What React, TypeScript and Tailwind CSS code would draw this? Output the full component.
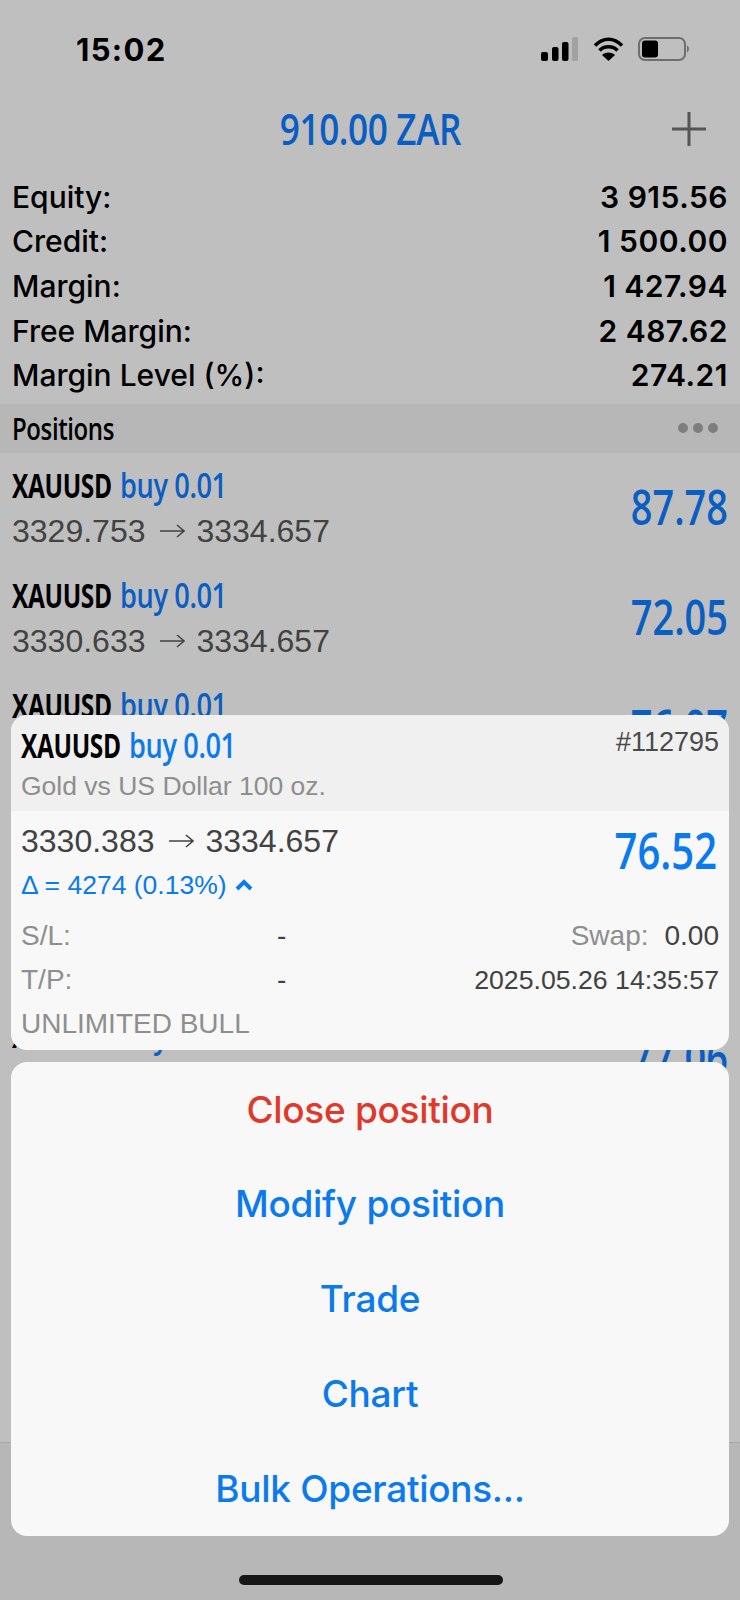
import React from "react";

const DIM_BLUE = "text-[#0a5ec2]";
const SANS = "font-['Open_Sans',sans-serif] font-semibold";
const HELV = "font-['Liberation_Sans',sans-serif]";

const Title = ({ blue }: { blue: string }) => (
  <div className={`flex h-[36px] items-center whitespace-nowrap text-[34px] tracking-[-0.5px] ${SANS}`}>
    <span className="inline-block origin-left scale-x-[0.72] font-bold text-black">XAUUSD</span>
    <span className={`ml-[-30px] inline-block origin-left scale-x-[0.8] ${blue}`}>buy 0.01</span>
  </div>
);

const Arrow = ({ color = "#424242" }: { color?: string }) => (
  <svg className="ml-[15px] mr-[11px] shrink-0" width="25" height="16" viewBox="0 0 25 16">
    <path d="M0 8H24M17 2L24 8L17 14" fill="none" stroke={color} strokeWidth="1.500" />
  </svg>
);

const Prices = ({ open }: { open: string }) => (
  <div className={`flex items-center ${HELV} text-[32px] text-[#424242]`}>
    <span>{open}</span>
    <Arrow />
    <span>3334.657</span>
  </div>
);

const accountRows = [
  ["Equity:", "3 915.56"],
  ["Credit:", "1 500.00"],
  ["Margin:", "1 427.94"],
  ["Free Margin:", "2 487.62"],
  ["Margin Level (%):", "274.21"],
];

// Rows four and five sit entirely behind the detail card.
const rows: (string[] | null)[] = [
  ["3329.753", "87.78"],
  ["3330.633", "72.05"],
  ["3330.383", "76.07"],
  null,
  null,
  ["3330.263", "77.06"],
];

export default function App() {
  return (
    <div className="relative flex h-[1600px] w-[740px] flex-col overflow-hidden bg-[#bfbfbf] font-['Inter',sans-serif]">
      {/* status bar */}
      <div className="flex h-[100px] shrink-0 items-center justify-between pb-[2px] pl-[76px] pr-[49px]">
        <span className="text-[31px] font-bold leading-none tracking-[1.3px] text-black">15:02</span>
        <svg width="150" height="24" viewBox="541 37 150 24">
          <rect x="541" y="52" width="7" height="9" rx="2" fill="#000" />
          <rect x="552" y="47" width="6.500" height="14" rx="2" fill="#000" />
          <rect x="562" y="42" width="6.500" height="19" rx="2" fill="#000" />
          <rect x="572" y="37" width="6" height="24" rx="1.500" fill="#a2a2a2" />
          <path d="M595 45.500C603 37 614 37 622 45.500M599.500 50.500C604 45.500 613 45.500 617.500 50.500" fill="none" stroke="#000" strokeWidth="3.500" />
          <path d="M602 55C605 51.500 612 51.500 615 55L608.500 61Z" fill="#000" />
          <rect x="639" y="38" width="46" height="22" rx="6" fill="none" stroke="#6e6e6e" strokeWidth="2" />
          <rect x="642" y="40.500" width="16" height="17" rx="3" fill="#000" />
          <path d="M687 45.500C689.500 46.500 689.500 51 687 52.500Z" fill="#6e6e6e" />
        </svg>
      </div>

      {/* header */}
      <div className="relative flex h-[60px] shrink-0 items-center justify-center pb-[4px]">
        <span className={`inline-block scale-x-[0.8] whitespace-nowrap text-[44px] tracking-[-0.5px] ${SANS} ${DIM_BLUE}`}>910.00 ZAR</span>
        <svg className="absolute right-[33px] top-[11px]" width="36" height="36" viewBox="0 0 36 36">
          <path d="M18 1V35M1 18H35" stroke="#555" strokeWidth="3" />
        </svg>
      </div>

      {/* account summary */}
      <div className="flex shrink-0 flex-col px-[12px] pt-[15px]">
        {accountRows.map(([label, value]) => (
          <div key={label} className="flex h-[44.600px] items-center justify-between text-[30px] font-medium text-black">
            <span>{label}</span>
            <span className="font-semibold tracking-[0.5px]">{value}</span>
          </div>
        ))}
      </div>

      {/* positions header */}
      <div className="mt-[6px] flex h-[49px] shrink-0 items-center justify-between bg-[#b7b7b7] pl-[12px] pr-[22px]">
        <span className={`inline-block origin-left scale-x-[0.8] text-[30px] font-bold tracking-[-0.5px] text-black ${SANS}`}>Positions</span>
        <div className="flex gap-[5px]">
          <span className="h-[10px] w-[10px] rounded-full bg-[#7e7e7e]" />
          <span className="h-[10px] w-[10px] rounded-full bg-[#7e7e7e]" />
          <span className="h-[10px] w-[10px] rounded-full bg-[#7e7e7e]" />
        </div>
      </div>

      {/* list */}
      <div className="min-h-0 flex-1 overflow-hidden">
        {rows.map((row, i) =>
          row ? (
            <div key={i} className="flex h-[110px] items-center justify-between pb-[2px] pl-[12px] pr-[12px]">
              <div className="mt-[9px] flex flex-col">
                <Title blue={DIM_BLUE} />
                <div className="mt-[4px]">
                  <Prices open={row[0]} />
                </div>
              </div>
              <span className={`origin-right scale-x-[0.79] text-[48px] ${SANS} ${DIM_BLUE}`}>{row[1]}</span>
            </div>
          ) : (
            <div key={i} className="h-[110px]" />
          )
        )}
      </div>

      {/* tab bar area */}
      <div className="h-[158px] shrink-0 border-t border-[#a8a8a8] bg-[#b7b7b7]" />

      {/* detail card */}
      <div className="absolute left-[11px] top-[715px] h-[335px] w-[718px] overflow-hidden rounded-[16px] bg-[#f8f8f8]">
        <div className="relative h-[96px] bg-[#f0f0f0] pl-[10px] pr-[10px] pt-[12px]">
          <Title blue="text-[#0a7aee]" />
          <div className={`mt-[7px] ${HELV} text-[26.500px] leading-[32px] text-[#8e8e8e]`}>Gold vs US Dollar 100 oz.</div>
          <span className={`absolute right-[10px] top-[13px] ${HELV} text-[27px] leading-[28px] text-[#4a4a4a]`}>#112795</span>
        </div>
        <div className="flex items-start justify-between pl-[10px] pr-[12px]">
          <div className="flex flex-col">
            <div className="mt-[10px] flex h-[40px] items-center">
              <Prices open="3330.383" />
            </div>
            <div className={`mt-[8px] flex items-center ${HELV} text-[26.500px] leading-[32px] text-[#0a7aee]`}>
              Δ = 4274 (0.13%)
              <svg className="ml-[8px]" width="18" height="12" viewBox="0 0 18 12">
                <path d="M2 10L9 3L16 10" fill="none" stroke="#0a7aee" strokeWidth="4" />
              </svg>
            </div>
          </div>
          <span className={`mt-[8px] origin-right scale-x-[0.8] text-[50px] leading-[62px] text-[#0a7aee] ${SANS}`}>76.52</span>
        </div>
        <div className={`mt-[13px] flex flex-col pl-[10px] pr-[10px] ${HELV} text-[28px] text-[#8e8e8e]`}>
          <div className="relative flex h-[44px] items-center justify-between">
            <span>S/L:</span>
            <span className="absolute left-[256px] text-[#424242]">-</span>
            <div className="flex gap-[16px]">
              <span>Swap:</span>
              <span className="text-[#424242]">0.00</span>
            </div>
          </div>
          <div className="relative flex h-[44px] items-center justify-between">
            <span>T/P:</span>
            <span className="absolute left-[256px] text-[#424242]">-</span>
            <span className="text-[26.700px] text-[#424242]">2025.05.26 14:35:57</span>
          </div>
          <div className="flex h-[44px] items-center">UNLIMITED BULL</div>
        </div>
      </div>

      {/* action sheet */}
      <div className="absolute left-[11px] top-[1062px] flex h-[474px] w-[718px] flex-col items-center justify-center rounded-[16px] bg-[#f8f8f8] text-[37px] font-medium tracking-[-0.3px] text-[#0a7aee]">
        <button className="h-[94.800px] text-[#e0392b]">Close position</button>
        <button className="h-[94.800px]">Modify position</button>
        <button className="h-[94.800px]">Trade</button>
        <button className="h-[94.800px]">Chart</button>
        <button className="h-[94.800px]">Bulk Operations...</button>
      </div>

      {/* home indicator */}
      <div className="absolute bottom-[15px] left-[239px] h-[10px] w-[264px] rounded-full bg-[#161616]" />
    </div>
  );
}
